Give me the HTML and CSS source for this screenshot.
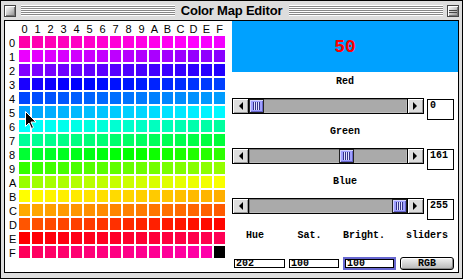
FILE: index.html
```html
<!DOCTYPE html>
<html lang="en">
<head>
    <meta charset="UTF-8">
    <meta name="viewport" content="width=device-width, initial-scale=1.0">
    <title>Color Map Editor</title>
    <link rel="stylesheet" href="styles.css">
</head>
<body>
    <div class="window">
        <div class="titlebar">
            <span class="close-box"></span>
            <span class="stripes"></span>
            <span class="title">Color Map Editor</span>
            <span class="stripes"></span>
            <span class="shade-box"></span>
        </div>
        <div class="content">
            <div class="color-map" id="color-map"></div>

            <div class="controls">
                <div class="swatch"><span class="swatch-index">50</span></div>

                <p class="channel-label">Red</p>
                <div class="channel">
                    <div class="scrollbar" data-value="0">
                        <span class="arrow arrow-left"><svg width="5" height="8" viewBox="0 0 5 8"><polygon points="5,0 5,8 1,4" /></svg></span>
                        <span class="track"><span class="thumb"></span></span>
                        <span class="arrow arrow-right"><svg width="5" height="8" viewBox="0 0 5 8"><polygon points="0,0 0,8 4,4" /></svg></span>
                    </div>
                    <div class="value-box">0</div>
                </div>

                <p class="channel-label">Green</p>
                <div class="channel">
                    <div class="scrollbar" data-value="161">
                        <span class="arrow arrow-left"><svg width="5" height="8" viewBox="0 0 5 8"><polygon points="5,0 5,8 1,4" /></svg></span>
                        <span class="track"><span class="thumb"></span></span>
                        <span class="arrow arrow-right"><svg width="5" height="8" viewBox="0 0 5 8"><polygon points="0,0 0,8 4,4" /></svg></span>
                    </div>
                    <div class="value-box">161</div>
                </div>

                <p class="channel-label">Blue</p>
                <div class="channel">
                    <div class="scrollbar" data-value="255">
                        <span class="arrow arrow-left"><svg width="5" height="8" viewBox="0 0 5 8"><polygon points="5,0 5,8 1,4" /></svg></span>
                        <span class="track"><span class="thumb"></span></span>
                        <span class="arrow arrow-right"><svg width="5" height="8" viewBox="0 0 5 8"><polygon points="0,0 0,8 4,4" /></svg></span>
                    </div>
                    <div class="value-box">255</div>
                </div>

                <div class="hsb-labels">
                    <span>Hue</span>
                    <span>Sat.</span>
                    <span>Bright.</span>
                    <span>sliders</span>
                </div>
                <div class="hsb-fields">
                    <span class="field">202</span>
                    <span class="field">100</span>
                    <span class="field field-focus">100</span>
                    <button class="mode-btn">RGB</button>
                </div>
            </div>
        </div>

        <svg class="cursor" width="12" height="19" viewBox="0 0 12 19">
            <path d="M0.5,0.5 L0.5,15.5 L4,12 L6.5,17.5 L8.5,16.5 L6,11 L11,11 Z" fill="#000" stroke="#fff" stroke-width="1" />
        </svg>
    </div>

    <script>
        const colorMap = document.getElementById("color-map");
        const hex = "0123456789ABCDEF";

        // index -> hue key points of the map
        const huePoints = [[0, 320], [52, 240], [96, 180], [136, 120], [176, 60], [224, 0], [254, -40]];

        const hueAt = (i) => {
            for (let k = 1; k < huePoints.length; k++) {
                const [i0, h0] = huePoints[k - 1];
                const [i1, h1] = huePoints[k];
                if (i <= i1) {
                    return h0 + (h1 - h0) * (i - i0) / (i1 - i0);
                }
            }
            return huePoints[huePoints.length - 1][1];
        };

        // corner + column labels
        colorMap.appendChild(document.createElement("span"));
        for (let c = 0; c < 16; c++) {
            const label = document.createElement("span");
            label.className = "col-label";
            label.textContent = hex[c];
            colorMap.appendChild(label);
        }

        for (let r = 0; r < 16; r++) {
            const label = document.createElement("span");
            label.className = "row-label";
            label.textContent = hex[r];
            colorMap.appendChild(label);
            for (let c = 0; c < 16; c++) {
                const i = r * 16 + c;
                const cell = document.createElement("span");
                cell.className = "cell";
                if (i === 255) {
                    cell.style.background = "#000";
                } else {
                    const hue = (hueAt(i) + 720) % 360;
                    cell.style.background = `hsl(${hue}, 100%, 50%)`;
                }
                colorMap.appendChild(cell);
            }
        }

        // slider thumbs
        document.querySelectorAll(".scrollbar").forEach((bar) => {
            const value = Number(bar.dataset.value);
            const track = bar.querySelector(".track");
            const thumb = bar.querySelector(".thumb");
            const range = track.clientWidth - thumb.offsetWidth;
            thumb.style.left = `${Math.round(value / 255 * range)}px`;
        });
    </script>
</body>
</html>
```

FILE: styles.css
```css
* {
    margin: 0;
    padding: 0;
    box-sizing: border-box;
}

body {
    background: #fff;
    font-family: "Liberation Sans", Arial, sans-serif;
}

.window {
    position: relative;
    width: 463px;
    height: 279px;
    border: 1px solid #000;
    background: #dddddd;
    padding: 0 3px 5px;
    display: flex;
    flex-direction: column;
}

/* title bar */
.titlebar {
    height: 19px;
    display: flex;
    align-items: center;
}

.close-box,
.shade-box {
    width: 12px;
    height: 12px;
    border: 1px solid #444;
    background: linear-gradient(135deg, #fff 0%, #ccc 50%, #888 100%);
    box-shadow: inset 1px 1px #fff, inset -1px -1px #777;
}

.shade-box {
    background:
        linear-gradient(#444, #444) 1px 4px / 8px 1px no-repeat,
        linear-gradient(#444, #444) 1px 6px / 8px 1px no-repeat,
        linear-gradient(135deg, #fff 0%, #ccc 50%, #888 100%);
}

.stripes {
    flex: 1;
    height: 11px;
    margin: 0 4px 0 5px;
    background: repeating-linear-gradient(to bottom, #fff 0 1px, #888 1px 2px);
}

.title {
    font-size: 13px;
    font-weight: bold;
    letter-spacing: -0.2px;
    padding: 0 2px;
    color: #000;
}

/* content */
.content {
    flex: 1;
    display: flex;
    border: 1px solid #000;
    background: #fff;
}

.color-map {
    width: 227px;
    display: grid;
    grid-template-columns: 12px repeat(16, 11px);
    grid-template-rows: 13px repeat(16, 12px);
    gap: 2px;
    align-content: start;
    font-size: 11px;
    color: #000;
}

.col-label {
    text-align: center;
    line-height: 13px;
    padding-top: 2px;
}

.row-label {
    padding-left: 4px;
    padding-top: 1px;
    line-height: 12px;
}

.controls {
    width: 226px;
    display: flex;
    flex-direction: column;
    font-family: "Liberation Mono", "Courier New", monospace;
    font-size: 10px;
    font-weight: bold;
}

.swatch {
    height: 51px;
    background: #00a1ff;
    display: flex;
    align-items: center;
    justify-content: center;
}

.swatch-index {
    color: #f00;
    font-size: 18px;
    font-weight: bold;
}

.channel-label {
    margin-top: 4px;
    height: 12px;
    line-height: 12px;
    text-align: center;
}

.channel + .channel-label {
    margin-top: 6px;
}

.channel {
    display: flex;
    align-items: flex-start;
    margin-top: 10px;
}

.scrollbar {
    width: 192px;
    height: 16px;
    border: 1px solid #000;
    display: flex;
}

.arrow {
    width: 16px;
    display: flex;
    align-items: center;
    justify-content: center;
    background: #ddd;
    box-shadow: inset 1px 1px #fff, inset -1px -1px #999;
}

.arrow-left {
    border-right: 1px solid #000;
}

.arrow-right {
    border-left: 1px solid #000;
}

.track {
    flex: 1;
    position: relative;
    background: #aaa;
    box-shadow: inset 1px 1px #777, inset -1px -1px #bbb;
}

.thumb {
    position: absolute;
    top: 0;
    bottom: 0;
    width: 15px;
    border: 1px solid #222;
    background: #a0a0ff;
    box-shadow: inset 1px 1px #d4d4ff, inset -1px -1px #6666cc;
    display: flex;
    align-items: center;
    justify-content: center;
}

.thumb::after {
    content: "";
    width: 7px;
    height: 8px;
    background: repeating-linear-gradient(to right, #333388 0 1px, #e0e0ff 1px 2px);
}

.value-box {
    width: 27px;
    height: 21px;
    margin: 1px 0 0 3px;
    border: 1px solid #000;
    padding: 1px 2px;
    line-height: 10px;
}

.hsb-labels {
    display: flex;
    gap: 4px;
    margin-top: 10px;
    padding-left: 2px;
    line-height: 12px;
    height: 12px;
}

.hsb-labels span {
    text-align: center;
}

.hsb-labels span:nth-child(1) {
    width: 51px;
    padding-right: 9px;
}

.hsb-labels span:nth-child(2) {
    width: 50px;
    padding-right: 9px;
}

.hsb-labels span:nth-child(3) {
    width: 53px;
    padding-right: 16px;
}

.hsb-labels span:nth-child(4) {
    width: 54px;
}

.hsb-fields {
    display: flex;
    align-items: center;
    gap: 4px;
    margin-top: 15px;
    padding-left: 2px;
    height: 13px;
}

.field {
    width: 51px;
    height: 9px;
    border: 1px solid #000;
    padding-left: 1px;
    line-height: 7px;
    overflow: visible;
    background: #fff;
}

.field:nth-child(2) {
    width: 50px;
}

.field-focus {
    width: 49px;
    margin: 0 2px;
    outline: 2px solid #6767d0;
}

.mode-btn {
    width: 54px;
    height: 13px;
    border: 1px solid #000;
    border-radius: 3px;
    background: linear-gradient(#f2f2f2, #b8b8b8);
    box-shadow: inset 1px 1px #fff, inset -1px -1px #888;
    font: inherit;
    line-height: 11px;
    color: #000;
}

.cursor {
    position: absolute;
    left: 24px;
    top: 110px;
}
```
